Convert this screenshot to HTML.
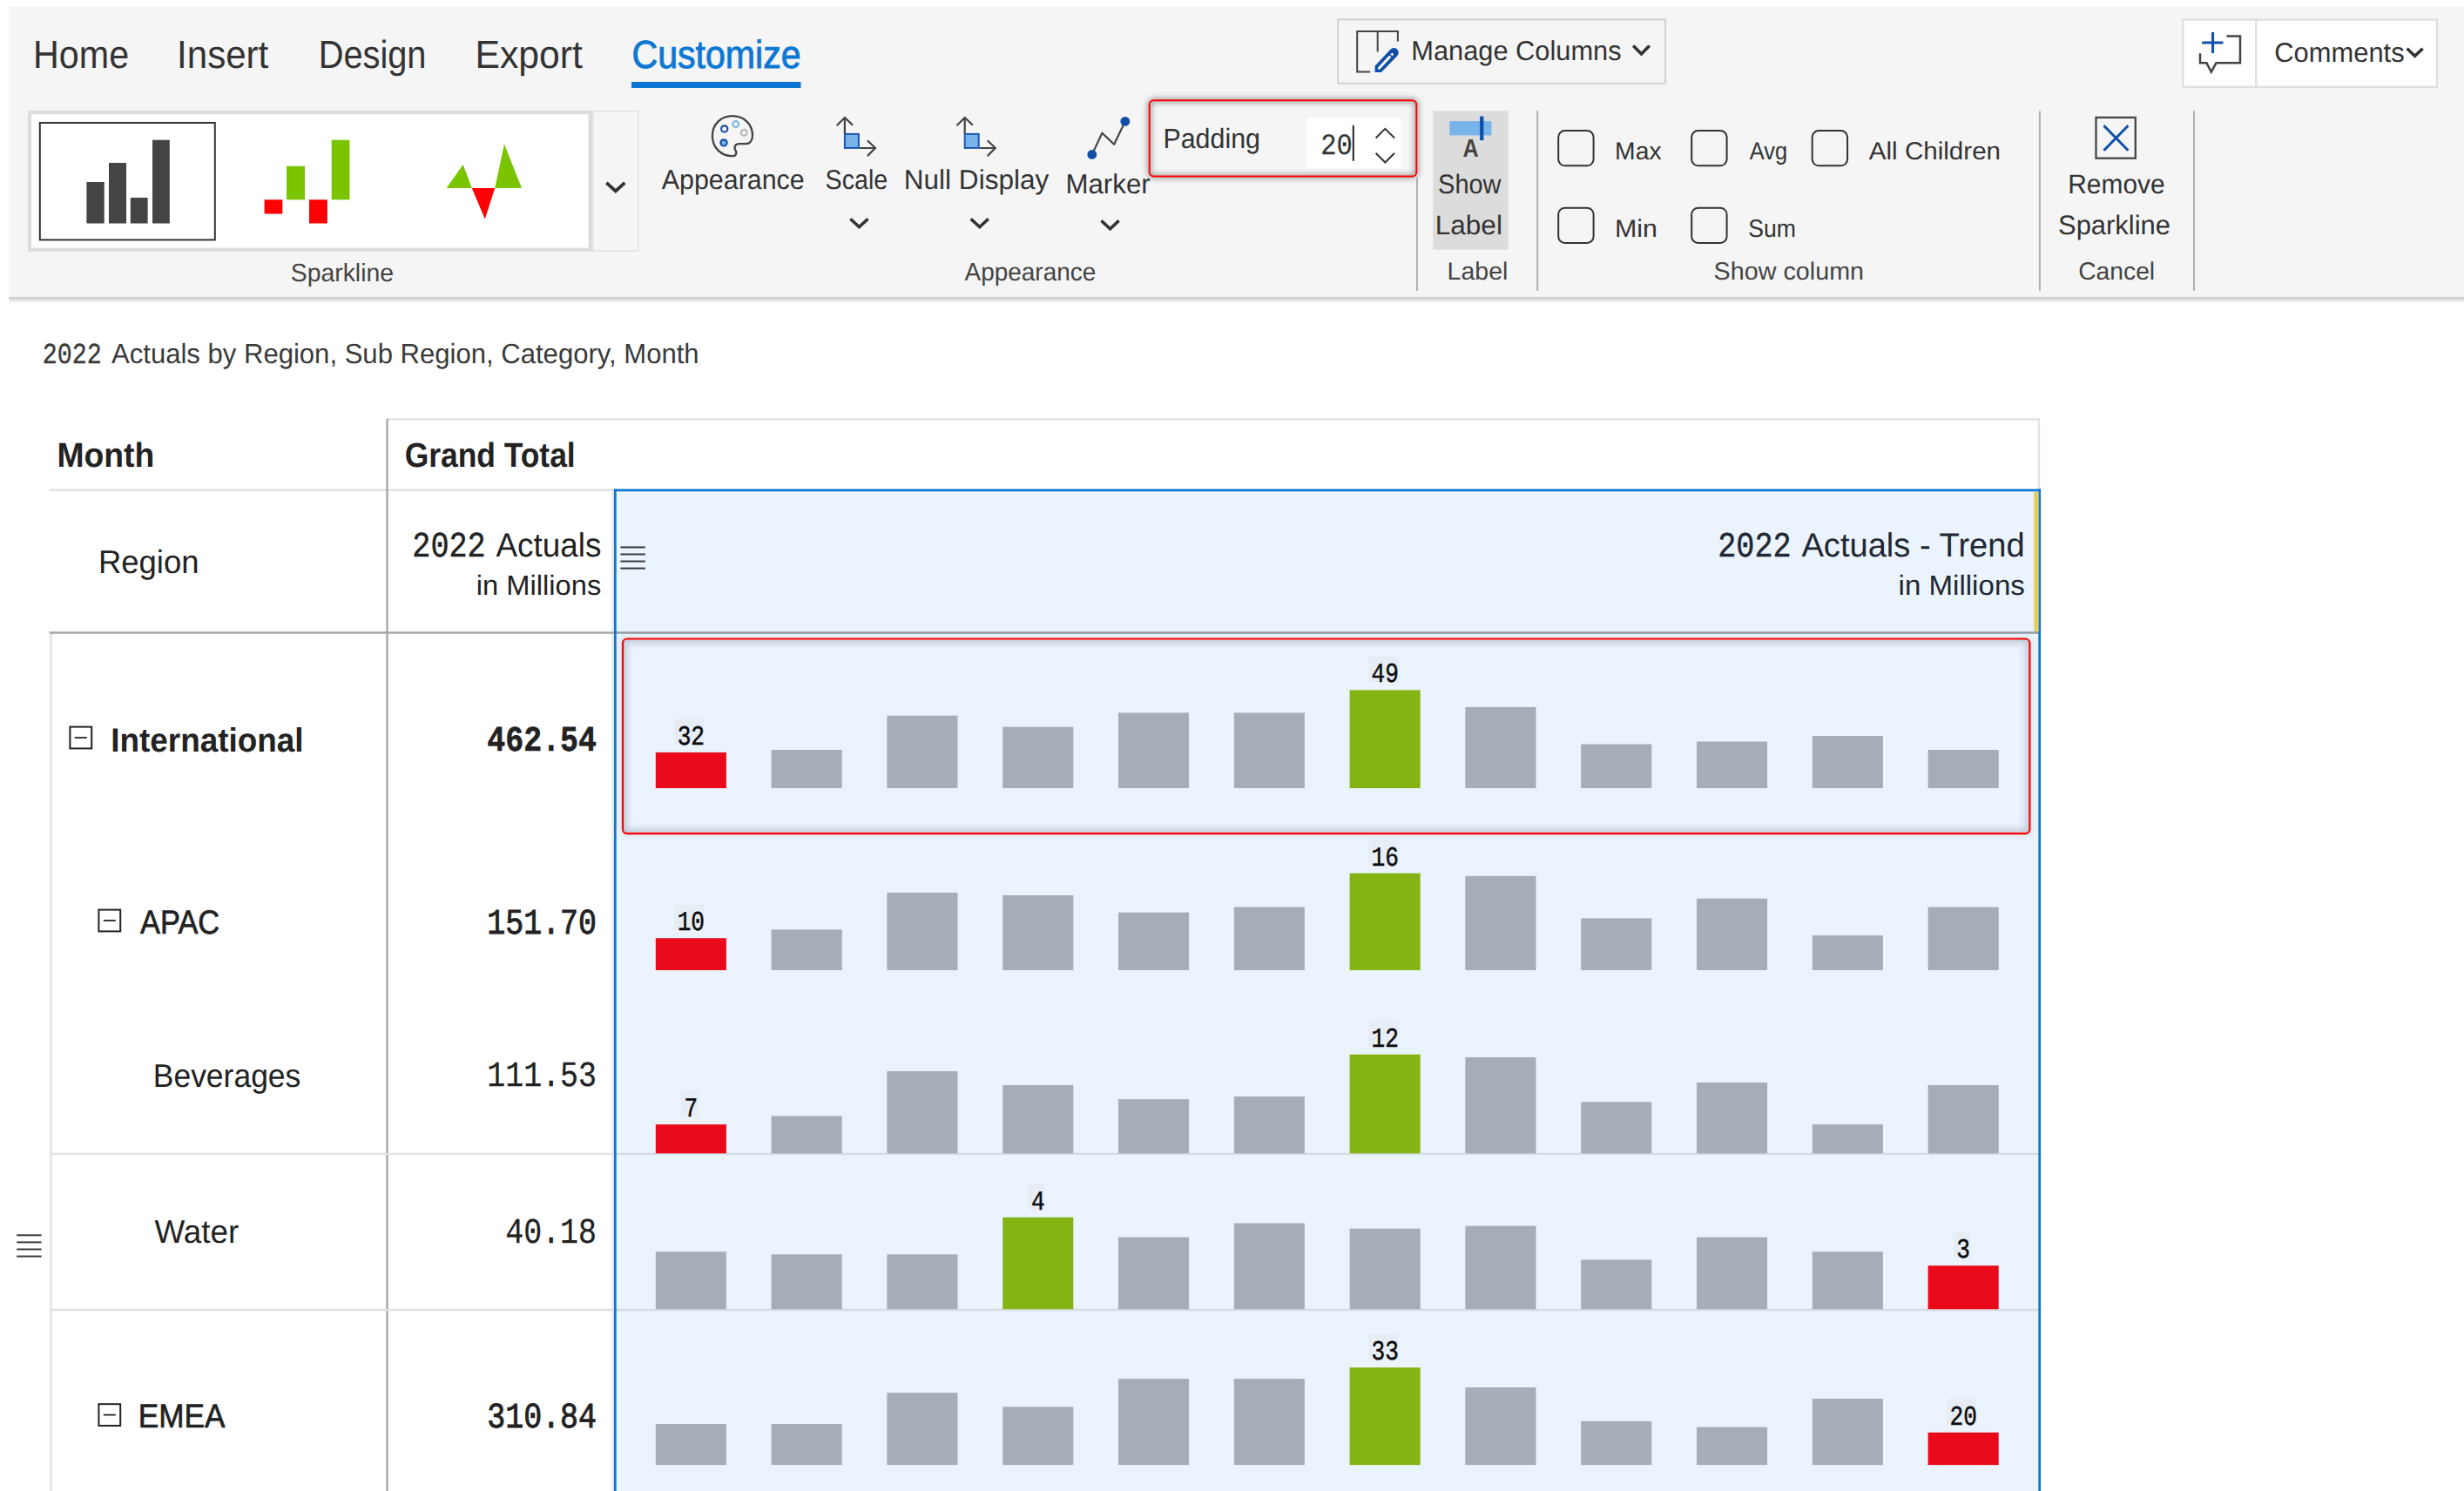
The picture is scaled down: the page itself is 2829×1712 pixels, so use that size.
<!DOCTYPE html>
<html lang="en">
<head>
<meta charset="utf-8">
<title>Sparkline padding</title>
<style>
html,body{margin:0;padding:0;background:#fff;}
body{width:2829px;height:1712px;overflow:hidden;font-family:"Liberation Sans",sans-serif;}
svg{display:block;position:absolute;left:0;top:0;}
text{white-space:pre;}
</style>
</head>
<body>
<svg width="2829" height="1712" viewBox="0 0 2829 1712" text-rendering="geometricPrecision">
<defs>
<linearGradient id="rshadow" x1="0" y1="0" x2="0" y2="1"><stop offset="0" stop-color="#000" stop-opacity="0.22"/><stop offset="1" stop-color="#000" stop-opacity="0"/></linearGradient>
<filter id="glow" x="-5%" y="-20%" width="110%" height="140%"><feGaussianBlur stdDeviation="3"/></filter>
<filter id="glow2" x="-5%" y="-20%" width="110%" height="140%"><feGaussianBlur stdDeviation="4"/></filter>
</defs>
<rect x="10.00" y="341.00" width="2819.00" height="7.00" fill="url(#rshadow)" />
<rect x="10.00" y="8.00" width="2819.00" height="333.00" fill="#f5f5f5" />
<rect x="725.00" y="94.00" width="194.50" height="7.00" fill="#0d78d4" />
<rect x="32.00" y="126.90" width="647.90" height="161.80" fill="#dcdcdc" />
<rect x="36.00" y="131.20" width="639.60" height="153.40" fill="#fff" />
<rect x="680.60" y="127.60" width="52.20" height="160.40" fill="#f5f5f5" stroke="#e0e0e0" stroke-width="1.4"/>
<rect x="45.80" y="141.00" width="201.00" height="134.40" fill="#fff" stroke="#333" stroke-width="2"/>
<rect x="99.40" y="209.00" width="20.30" height="47.50" fill="#444" />
<rect x="125.00" y="187.00" width="20.00" height="69.50" fill="#444" />
<rect x="149.80" y="227.00" width="19.80" height="29.50" fill="#444" />
<rect x="175.00" y="160.70" width="19.80" height="95.80" fill="#444" />
<rect x="303.60" y="229.30" width="20.70" height="16.20" fill="#ff0000" />
<rect x="329.00" y="190.70" width="21.00" height="38.60" fill="#7bc400" />
<rect x="355.00" y="229.30" width="20.80" height="27.20" fill="#ff0000" />
<rect x="380.70" y="160.70" width="20.70" height="68.60" fill="#7bc400" />
<path d="M512.6 216 L531.7 189 L541.8 216 Z" stroke="none" stroke-width="2" fill="#7bc400" />
<path d="M541.8 216 L568.2 216 L556.8 251.6 Z" stroke="none" stroke-width="2" fill="#ff0000" />
<path d="M568.2 216 L579 165.6 L599 216 Z" stroke="none" stroke-width="2" fill="#7bc400" />
<path d="M696.30 209.80 L706.80 219.40 L717.30 209.80" stroke="#333" stroke-width="3.8" fill="none" stroke-linejoin="miter"/>
<path d="M841 133.2 C827 133.2 817.9 143.5 817.9 156 C817.9 169.5 828 179.2 840.5 179.2 C845.5 179.2 846.3 175.5 844.4 172.3 C842.3 168.6 844.3 165.2 848.6 165.2 L855.5 165.2 C861 165.2 864 161 864 155.5 C864 143 854.5 133.2 841 133.2 Z" stroke="#444" stroke-width="2.3" fill="none" />
<circle cx="831.7" cy="147.9" r="3.6" fill="#fff" stroke="#1a4fa8" stroke-width="2.2"/>
<circle cx="844.7" cy="142.6" r="3.4" fill="#fff" stroke="#7db8e8" stroke-width="2.2"/>
<circle cx="854.2" cy="152.3" r="3.4" fill="#fff" stroke="#b8b8b8" stroke-width="2.2"/>
<circle cx="831" cy="163.9" r="3.6" fill="#78b4ea" stroke="#1a4fa8" stroke-width="2.2"/>
<path d="M969.9 153 L969.9 135.4 M960.6 144.3 L969.9 135 L979 143.6" stroke="#444" stroke-width="2.2" fill="none" />
<path d="M986.8 170 L1004.6 170 M995.9 161.2 L1005 170 L995.9 179.1" stroke="#444" stroke-width="2.2" fill="none" />
<rect x="969.90" y="153.90" width="16.00" height="16.00" fill="#78b4ea" stroke="#1c56b0" stroke-width="2"/>
<path d="M976.40 251.40 L986.45 260.60 L996.50 251.40" stroke="#333" stroke-width="3.5" fill="none" stroke-linejoin="miter"/>
<path d="M1107.7 153 L1107.7 135.4 M1098.4 144.3 L1107.7 135 L1116.8 143.6" stroke="#444" stroke-width="2.2" fill="none" />
<path d="M1124.6 170 L1142.4 170 M1133.7 161.2 L1142.8 170 L1133.7 179.1" stroke="#444" stroke-width="2.2" fill="none" />
<rect x="1107.70" y="153.90" width="16.00" height="16.00" fill="#78b4ea" stroke="#1c56b0" stroke-width="2"/>
<path d="M1114.70 251.40 L1124.75 260.60 L1134.80 251.40" stroke="#333" stroke-width="3.5" fill="none" stroke-linejoin="miter"/>
<path d="M1253.8 177.4 L1265.4 152.7 L1279.1 165.8 L1291.8 139.4" stroke="#444" stroke-width="2.2" fill="none" stroke-linejoin="round"/>
<circle cx="1253.8" cy="177.4" r="5.4" fill="#0f4fa8"/>
<circle cx="1291.8" cy="139.4" r="5.4" fill="#0f4fa8"/>
<path d="M1264.50 253.40 L1274.55 262.80 L1284.60 253.40" stroke="#333" stroke-width="3.5" fill="none" stroke-linejoin="miter"/>
<rect x="1319.7" y="115.2" width="306.6" height="87.2" rx="5" fill="#f5f5f5"/>
<rect x="1319.7" y="115.2" width="306.6" height="87.2" rx="5" fill="none" stroke="#000" stroke-opacity="0.38" stroke-width="5" filter="url(#glow)"/>
<rect x="1319.7" y="115.2" width="306.6" height="87.2" rx="5" fill="none" stroke="#ff0000" stroke-width="2"/>
<rect x="1500.50" y="135.50" width="107.80" height="58.00" fill="#fff" />
<rect x="1552.80" y="143.80" width="2.00" height="41.00" fill="#222" />
<path d="M1579.60 158.50 L1590.35 147.90 L1601.10 158.50" stroke="#333" stroke-width="2" fill="none" stroke-linejoin="miter"/>
<path d="M1579.60 175.70 L1590.35 186.50 L1601.10 175.70" stroke="#333" stroke-width="2" fill="none" stroke-linejoin="miter"/>
<rect x="1536.20" y="22.40" width="375.80" height="73.40" fill="#f5f5f5" stroke="#cfcfcf" stroke-width="1.8"/>
<path d="M1573.2 82.4 L1558.2 82.4 L1558.2 36 L1604.9 36 L1604.9 47.5 M1581.7 36 L1581.7 59.4" stroke="#444" stroke-width="2" fill="none" />
<path d="M1578.6 83 L1578.6 75.8 L1596.4 56.8 A5.3 5.3 0 0 1 1604.4 64 L1586 83 Z" stroke="none" stroke-width="0" fill="#0f4fa8" />
<path d="M1583.4 78.2 L1598.4 62.3" stroke="#f5f5f5" stroke-width="3.1" fill="none" stroke-linecap="round"/>
<path d="M1594.2 61.6 L1599.4 66.4" stroke="#0f4fa8" stroke-width="1.8" fill="none" />
<path d="M1875.20 52.60 L1884.50 62.00 L1893.80 52.60" stroke="#333" stroke-width="3.6" fill="none" stroke-linejoin="miter"/>
<rect x="2506.40" y="22.60" width="291.60" height="77.20" fill="#fff" stroke="#dedede" stroke-width="2.3"/>
<line x1="2590.20" y1="22.50" x2="2590.20" y2="99.80" stroke="#dedede" stroke-width="2.2" />
<path d="M2540.6 36.9 L2540.6 61 M2528.2 49 L2552.5 49" stroke="#0f4fa8" stroke-width="3" fill="none" />
<path d="M2556.5 41.6 L2572 41.6 L2572 72.3 L2544.4 72.3 L2538.8 82.5 L2533.5 72.3 L2526 72.3 L2526 61.3" stroke="#444" stroke-width="2.5" fill="none" />
<path d="M2763.60 55.80 L2772.60 64.20 L2781.60 55.80" stroke="#333" stroke-width="3.6" fill="none" stroke-linejoin="miter"/>
<line x1="1627.00" y1="203.50" x2="1627.00" y2="334.00" stroke="#b0b0b0" stroke-width="2" />
<line x1="1765.20" y1="127.30" x2="1765.20" y2="334.00" stroke="#b0b0b0" stroke-width="2" />
<line x1="2341.90" y1="127.30" x2="2341.90" y2="334.00" stroke="#b0b0b0" stroke-width="2" />
<line x1="2519.00" y1="127.30" x2="2519.00" y2="334.00" stroke="#b0b0b0" stroke-width="2" />
<rect x="1645.30" y="127.30" width="86.60" height="159.40" fill="#dcdcdc" />
<rect x="1664.30" y="139.10" width="48.10" height="16.30" fill="#78b4ea" />
<rect x="1699.10" y="133.60" width="4.30" height="27.50" fill="#0f4fa8" />
<rect x="1789.2" y="150" width="40.4" height="40.3" rx="7.5" fill="none" stroke="#333" stroke-width="2"/>
<rect x="1942.2" y="150" width="40.4" height="40.3" rx="7.5" fill="none" stroke="#333" stroke-width="2"/>
<rect x="2080.7" y="150" width="40.4" height="40.3" rx="7.5" fill="none" stroke="#333" stroke-width="2"/>
<rect x="1789.2" y="238.7" width="40.4" height="40.3" rx="7.5" fill="none" stroke="#333" stroke-width="2"/>
<rect x="1942.2" y="238.7" width="40.4" height="40.3" rx="7.5" fill="none" stroke="#333" stroke-width="2"/>
<rect x="2406.50" y="134.90" width="45.30" height="46.80" fill="none" stroke="#444" stroke-width="2.3"/>
<path d="M2415.5 144.2 L2443.4 172.7 M2443.4 144.2 L2415.5 172.7" stroke="#0f4fa8" stroke-width="3" fill="none" />
<rect x="706.30" y="562.70" width="1636.40" height="1149.30" fill="#ebf3fc" />
<line x1="703.50" y1="563.00" x2="703.50" y2="1712.00" stroke="#ebe8e5" stroke-width="2" />
<line x1="444.50" y1="481.60" x2="2342.00" y2="481.60" stroke="#e2e2e2" stroke-width="2.5" />
<line x1="2341.00" y1="481.60" x2="2341.00" y2="563.00" stroke="#e2e2e2" stroke-width="2.5" />
<line x1="56.60" y1="562.70" x2="705.00" y2="562.70" stroke="#e2e2e2" stroke-width="2.5" />
<line x1="444.50" y1="481.00" x2="444.50" y2="1712.00" stroke="#a8a8a8" stroke-width="2.4" />
<line x1="58.50" y1="726.00" x2="58.50" y2="1712.00" stroke="#e6e6e6" stroke-width="2.8" />
<line x1="56.60" y1="726.50" x2="706.00" y2="726.50" stroke="#a6a6a6" stroke-width="2.4" />
<line x1="706.00" y1="726.50" x2="2342.00" y2="726.50" stroke="#939ba6" stroke-width="2.4" />
<line x1="56.60" y1="1324.90" x2="705.00" y2="1324.90" stroke="#e2e2e2" stroke-width="2.4" />
<line x1="707.00" y1="1324.90" x2="2341.00" y2="1324.90" stroke="#d5dbe3" stroke-width="2.4" />
<line x1="56.60" y1="1504.00" x2="705.00" y2="1504.00" stroke="#e2e2e2" stroke-width="2.4" />
<line x1="707.00" y1="1504.00" x2="2341.00" y2="1504.00" stroke="#d5dbe3" stroke-width="2.4" />
<line x1="706.30" y1="561.60" x2="706.30" y2="1712.00" stroke="#0d78d4" stroke-width="2.8" />
<line x1="2341.70" y1="561.60" x2="2341.70" y2="1712.00" stroke="#0d78d4" stroke-width="2.8" />
<line x1="704.90" y1="562.80" x2="2343.10" y2="562.80" stroke="#0d78d4" stroke-width="2.8" />
<rect x="2335.30" y="565.00" width="5.20" height="160.00" fill="#e6cf5a" />
<line x1="712.40" y1="628.40" x2="740.80" y2="628.40" stroke="#3a3a3a" stroke-width="2" />
<line x1="712.40" y1="636.47" x2="740.80" y2="636.47" stroke="#3a3a3a" stroke-width="2" />
<line x1="712.40" y1="644.53" x2="740.80" y2="644.53" stroke="#3a3a3a" stroke-width="2" />
<line x1="712.40" y1="652.60" x2="740.80" y2="652.60" stroke="#3a3a3a" stroke-width="2" />
<line x1="19.20" y1="1418.30" x2="47.60" y2="1418.30" stroke="#3a3a3a" stroke-width="2" />
<line x1="19.20" y1="1426.40" x2="47.60" y2="1426.40" stroke="#3a3a3a" stroke-width="2" />
<line x1="19.20" y1="1434.50" x2="47.60" y2="1434.50" stroke="#3a3a3a" stroke-width="2" />
<line x1="19.20" y1="1442.60" x2="47.60" y2="1442.60" stroke="#3a3a3a" stroke-width="2" />
<rect x="80.40" y="834.60" width="24.80" height="24.80" fill="#fff" stroke="#222" stroke-width="2"/>
<line x1="85.80" y1="847.00" x2="99.80" y2="847.00" stroke="#222" stroke-width="1.8" />
<rect x="113.40" y="1044.60" width="24.80" height="24.80" fill="#fff" stroke="#222" stroke-width="2"/>
<line x1="118.80" y1="1057.00" x2="132.80" y2="1057.00" stroke="#222" stroke-width="1.8" />
<rect x="113.40" y="1612.20" width="24.80" height="24.80" fill="#fff" stroke="#222" stroke-width="2"/>
<line x1="118.80" y1="1624.60" x2="132.80" y2="1624.60" stroke="#222" stroke-width="1.8" />
<rect x="752.80" y="863.90" width="81.10" height="41.10" fill="#ea0a1b" />
<rect x="774.25" y="825.20" width="34.80" height="29.50" fill="#e6edf5" />
<rect x="885.60" y="861.00" width="81.10" height="44.00" fill="#a6adb8" />
<rect x="1018.40" y="821.70" width="81.10" height="83.30" fill="#a6adb8" />
<rect x="1151.20" y="834.60" width="81.10" height="70.40" fill="#a6adb8" />
<rect x="1284.00" y="818.40" width="81.10" height="86.60" fill="#a6adb8" />
<rect x="1416.80" y="818.40" width="81.10" height="86.60" fill="#a6adb8" />
<rect x="1549.60" y="792.40" width="81.10" height="112.60" fill="#84b414" />
<rect x="1571.05" y="753.70" width="34.80" height="29.50" fill="#e6edf5" />
<rect x="1682.40" y="811.90" width="81.10" height="93.10" fill="#a6adb8" />
<rect x="1815.20" y="854.50" width="81.10" height="50.50" fill="#a6adb8" />
<rect x="1948.00" y="851.50" width="81.10" height="53.50" fill="#a6adb8" />
<rect x="2080.80" y="845.00" width="81.10" height="60.00" fill="#a6adb8" />
<rect x="2213.60" y="861.00" width="81.10" height="44.00" fill="#a6adb8" />
<rect x="752.80" y="1077.20" width="81.10" height="36.80" fill="#ea0a1b" />
<rect x="774.25" y="1038.50" width="34.80" height="29.50" fill="#e6edf5" />
<rect x="885.60" y="1067.40" width="81.10" height="46.60" fill="#a6adb8" />
<rect x="1018.40" y="1024.90" width="81.10" height="89.10" fill="#a6adb8" />
<rect x="1151.20" y="1028.00" width="81.10" height="86.00" fill="#a6adb8" />
<rect x="1284.00" y="1047.70" width="81.10" height="66.30" fill="#a6adb8" />
<rect x="1416.80" y="1041.50" width="81.10" height="72.50" fill="#a6adb8" />
<rect x="1549.60" y="1002.70" width="81.10" height="111.30" fill="#84b414" />
<rect x="1571.05" y="964.00" width="34.80" height="29.50" fill="#e6edf5" />
<rect x="1682.40" y="1005.80" width="81.10" height="108.20" fill="#a6adb8" />
<rect x="1815.20" y="1054.40" width="81.10" height="59.60" fill="#a6adb8" />
<rect x="1948.00" y="1031.70" width="81.10" height="82.30" fill="#a6adb8" />
<rect x="2080.80" y="1074.10" width="81.10" height="39.90" fill="#a6adb8" />
<rect x="2213.60" y="1041.50" width="81.10" height="72.50" fill="#a6adb8" />
<rect x="752.80" y="1291.10" width="81.10" height="33.20" fill="#ea0a1b" />
<rect x="782.10" y="1252.40" width="19.10" height="29.50" fill="#e6edf5" />
<rect x="885.60" y="1281.30" width="81.10" height="43.00" fill="#a6adb8" />
<rect x="1018.40" y="1230.00" width="81.10" height="94.30" fill="#a6adb8" />
<rect x="1151.20" y="1246.00" width="81.10" height="78.30" fill="#a6adb8" />
<rect x="1284.00" y="1262.10" width="81.10" height="62.20" fill="#a6adb8" />
<rect x="1416.80" y="1259.00" width="81.10" height="65.30" fill="#a6adb8" />
<rect x="1549.60" y="1210.80" width="81.10" height="113.50" fill="#84b414" />
<rect x="1571.05" y="1172.10" width="34.80" height="29.50" fill="#e6edf5" />
<rect x="1682.40" y="1214.00" width="81.10" height="110.30" fill="#a6adb8" />
<rect x="1815.20" y="1265.20" width="81.10" height="59.10" fill="#a6adb8" />
<rect x="1948.00" y="1243.00" width="81.10" height="81.30" fill="#a6adb8" />
<rect x="2080.80" y="1291.10" width="81.10" height="33.20" fill="#a6adb8" />
<rect x="2213.60" y="1246.00" width="81.10" height="78.30" fill="#a6adb8" />
<rect x="752.80" y="1437.20" width="81.10" height="66.00" fill="#a6adb8" />
<rect x="885.60" y="1440.30" width="81.10" height="62.90" fill="#a6adb8" />
<rect x="1018.40" y="1440.30" width="81.10" height="62.90" fill="#a6adb8" />
<rect x="1151.20" y="1397.80" width="81.10" height="105.40" fill="#84b414" />
<rect x="1180.50" y="1359.10" width="19.10" height="29.50" fill="#e6edf5" />
<rect x="1284.00" y="1420.60" width="81.10" height="82.60" fill="#a6adb8" />
<rect x="1416.80" y="1404.50" width="81.10" height="98.70" fill="#a6adb8" />
<rect x="1549.60" y="1410.70" width="81.10" height="92.50" fill="#a6adb8" />
<rect x="1682.40" y="1407.60" width="81.10" height="95.60" fill="#a6adb8" />
<rect x="1815.20" y="1446.50" width="81.10" height="56.70" fill="#a6adb8" />
<rect x="1948.00" y="1420.60" width="81.10" height="82.60" fill="#a6adb8" />
<rect x="2080.80" y="1437.20" width="81.10" height="66.00" fill="#a6adb8" />
<rect x="2213.60" y="1453.20" width="81.10" height="50.00" fill="#ea0a1b" />
<rect x="2242.90" y="1414.50" width="19.10" height="29.50" fill="#e6edf5" />
<rect x="752.80" y="1635.00" width="81.10" height="47.10" fill="#a6adb8" />
<rect x="885.60" y="1635.00" width="81.10" height="47.10" fill="#a6adb8" />
<rect x="1018.40" y="1599.20" width="81.10" height="82.90" fill="#a6adb8" />
<rect x="1151.20" y="1615.30" width="81.10" height="66.80" fill="#a6adb8" />
<rect x="1284.00" y="1583.20" width="81.10" height="98.90" fill="#a6adb8" />
<rect x="1416.80" y="1583.20" width="81.10" height="98.90" fill="#a6adb8" />
<rect x="1549.60" y="1570.20" width="81.10" height="111.90" fill="#84b414" />
<rect x="1571.05" y="1531.50" width="34.80" height="29.50" fill="#e6edf5" />
<rect x="1682.40" y="1593.00" width="81.10" height="89.10" fill="#a6adb8" />
<rect x="1815.20" y="1631.90" width="81.10" height="50.20" fill="#a6adb8" />
<rect x="1948.00" y="1638.60" width="81.10" height="43.50" fill="#a6adb8" />
<rect x="2080.80" y="1606.00" width="81.10" height="76.10" fill="#a6adb8" />
<rect x="2213.60" y="1644.80" width="81.10" height="37.30" fill="#ea0a1b" />
<rect x="2235.05" y="1606.10" width="34.80" height="29.50" fill="#e6edf5" />
<clipPath id="rbclip"><rect x="715" y="733.5" width="1615.4" height="223.6" rx="5"/></clipPath>
<rect x="715" y="733.5" width="1615.4" height="223.6" rx="5" fill="none" stroke="#34465c" stroke-opacity="0.10" stroke-width="5" filter="url(#glow)"/>
<rect x="715" y="733.5" width="1615.4" height="223.6" rx="5" fill="none" stroke="#34465c" stroke-opacity="0.22" stroke-width="8" filter="url(#glow2)" clip-path="url(#rbclip)"/>
<rect x="715" y="733.5" width="1615.4" height="223.6" rx="5" fill="none" stroke="#ff0000" stroke-width="2.2"/>
<text transform="translate(38.05 78.00) scale(0.9172 1)" font-family="'Liberation Sans', sans-serif" font-size="45" font-weight="400" fill="#333">Home</text>
<text transform="translate(203.06 78.00) scale(0.9345 1)" font-family="'Liberation Sans', sans-serif" font-size="45" font-weight="400" fill="#333">Insert</text>
<text transform="translate(365.65 78.00) scale(0.8841 1)" font-family="'Liberation Sans', sans-serif" font-size="45" font-weight="400" fill="#333">Design</text>
<text transform="translate(545.46 78.00) scale(0.9478 1)" font-family="'Liberation Sans', sans-serif" font-size="45" font-weight="400" fill="#333">Export</text>
<text transform="translate(725.47 78.00) scale(0.9134 1)" font-family="'Liberation Sans', sans-serif" font-size="45" font-weight="400" fill="#0d78d4" stroke="#0d78d4" stroke-width="0.9">Customize</text>
<text transform="translate(333.82 322.60) scale(0.9775 1)" font-family="'Liberation Sans', sans-serif" font-size="29" font-weight="400" fill="#444">Sparkline</text>
<text transform="translate(759.80 217.20) scale(0.9648 1)" font-family="'Liberation Sans', sans-serif" font-size="31.5" font-weight="400" fill="#333">Appearance</text>
<text transform="translate(947.59 217.40) scale(0.9084 1)" font-family="'Liberation Sans', sans-serif" font-size="31.5" font-weight="400" fill="#333">Scale</text>
<text transform="translate(1037.80 217.40) scale(1.0009 1)" font-family="'Liberation Sans', sans-serif" font-size="31.5" font-weight="400" fill="#333">Null Display</text>
<text transform="translate(1223.42 222.40) scale(0.9925 1)" font-family="'Liberation Sans', sans-serif" font-size="31.5" font-weight="400" fill="#333">Marker</text>
<text transform="translate(1335.40 170.40) scale(0.9504 1)" font-family="'Liberation Sans', sans-serif" font-size="32" font-weight="400" fill="#333">Padding</text>
<text transform="translate(1516.20 176.70) scale(0.8923 1)" font-family="'Liberation Mono', monospace" font-size="34.18" font-weight="400" fill="#333" stroke="#333" stroke-width="0.25">20</text>
<text transform="translate(1107.50 321.50) scale(0.9641 1)" font-family="'Liberation Sans', sans-serif" font-size="29" font-weight="400" fill="#444">Appearance</text>
<text transform="translate(1620.24 68.80) scale(0.9778 1)" font-family="'Liberation Sans', sans-serif" font-size="31.5" font-weight="400" fill="#333">Manage Columns</text>
<text transform="translate(2611.22 70.60) scale(0.9812 1)" font-family="'Liberation Sans', sans-serif" font-size="31.5" font-weight="400" fill="#333">Comments</text>
<text transform="translate(1679.40 180.40) scale(0.8667 1)" font-family="'Liberation Sans', sans-serif" font-size="29" font-weight="700" fill="#444">A</text>
<text transform="translate(1651.07 221.90) scale(0.9344 1)" font-family="'Liberation Sans', sans-serif" font-size="31" font-weight="400" fill="#333">Show</text>
<text transform="translate(1647.66 269.40) scale(1.0186 1)" font-family="'Liberation Sans', sans-serif" font-size="31" font-weight="400" fill="#333">Label</text>
<text transform="translate(1661.60 321.00) scale(1.0000 1)" font-family="'Liberation Sans', sans-serif" font-size="28.5" font-weight="400" fill="#444">Label</text>
<text transform="translate(1854.12 182.80) scale(0.9924 1)" font-family="'Liberation Sans', sans-serif" font-size="28.5" font-weight="400" fill="#333">Max</text>
<text transform="translate(2008.70 182.80) scale(0.8943 1)" font-family="'Liberation Sans', sans-serif" font-size="28.5" font-weight="400" fill="#333">Avg</text>
<text transform="translate(2145.80 182.80) scale(1.0377 1)" font-family="'Liberation Sans', sans-serif" font-size="28.5" font-weight="400" fill="#333">All Children</text>
<text transform="translate(1853.97 272.10) scale(1.0672 1)" font-family="'Liberation Sans', sans-serif" font-size="28.5" font-weight="400" fill="#333">Min</text>
<text transform="translate(2007.17 272.10) scale(0.9345 1)" font-family="'Liberation Sans', sans-serif" font-size="28.5" font-weight="400" fill="#333">Sum</text>
<text transform="translate(1967.59 321.00) scale(1.0081 1)" font-family="'Liberation Sans', sans-serif" font-size="28.5" font-weight="400" fill="#444">Show column</text>
<text transform="translate(2374.27 221.90) scale(0.9644 1)" font-family="'Liberation Sans', sans-serif" font-size="31" font-weight="400" fill="#333">Remove</text>
<text transform="translate(2363.00 269.40) scale(0.9977 1)" font-family="'Liberation Sans', sans-serif" font-size="31" font-weight="400" fill="#333">Sparkline</text>
<text transform="translate(2386.21 321.00) scale(0.9909 1)" font-family="'Liberation Sans', sans-serif" font-size="28.5" font-weight="400" fill="#444">Cancel</text>
<text transform="translate(48.80 416.60) scale(0.8438 1)" font-family="'Liberation Mono', monospace" font-size="33.58" font-weight="400" fill="#3a3a3a" stroke="#3a3a3a" stroke-width="0.4">2022</text>
<text transform="translate(128.00 416.60) scale(0.9708 1)" font-family="'Liberation Sans', sans-serif" font-size="32" font-weight="400" fill="#3a3a3a">Actuals by Region, Sub Region, Category, Month</text>
<text transform="translate(65.41 536.20) scale(0.9439 1)" font-family="'Liberation Sans', sans-serif" font-size="39.5" font-weight="700" fill="#222">Month</text>
<text transform="translate(464.70 536.20) scale(0.8960 1)" font-family="'Liberation Sans', sans-serif" font-size="39.5" font-weight="700" fill="#222">Grand Total</text>
<text transform="translate(112.88 657.60) scale(0.9730 1)" font-family="'Liberation Sans', sans-serif" font-size="37.5" font-weight="400" fill="#222">Region</text>
<text transform="translate(473.30 639.30) scale(0.8538 1)" font-family="'Liberation Mono', monospace" font-size="41.19" font-weight="400" fill="#222" stroke="#222" stroke-width="0.5">2022</text>
<text transform="translate(569.50 639.30) scale(0.9576 1)" font-family="'Liberation Sans', sans-serif" font-size="38.5" font-weight="400" fill="#222">Actuals</text>
<text transform="translate(546.86 683.40) scale(1.0205 1)" font-family="'Liberation Sans', sans-serif" font-size="32" font-weight="400" fill="#222">in Millions</text>
<text transform="translate(1972.20 638.80) scale(0.8630 1)" font-family="'Liberation Mono', monospace" font-size="40.75" font-weight="400" fill="#1f2833" stroke="#1f2833" stroke-width="0.5">2022</text>
<text transform="translate(2068.40 638.80) scale(0.9899 1)" font-family="'Liberation Sans', sans-serif" font-size="38.5" font-weight="400" fill="#1f2833">Actuals - Trend</text>
<text transform="translate(2179.53 682.80) scale(1.0343 1)" font-family="'Liberation Sans', sans-serif" font-size="32" font-weight="400" fill="#1f2833">in Millions</text>
<text transform="translate(127.18 862.70) scale(0.9584 1)" font-family="'Liberation Sans', sans-serif" font-size="38.5" font-weight="700" fill="#222">International</text>
<text transform="translate(559.30 862.20) scale(0.8477 1)" font-family="'Liberation Mono', monospace" font-size="41.19" font-weight="700" fill="#222" stroke="#222" stroke-width="0.6">462.54</text>
<text transform="translate(161.10 1071.90) scale(0.8925 1)" font-family="'Liberation Sans', sans-serif" font-size="38.5" font-weight="400" fill="#222" stroke="#222" stroke-width="0.7">APAC</text>
<text transform="translate(559.30 1071.80) scale(0.8477 1)" font-family="'Liberation Mono', monospace" font-size="41.19" font-weight="400" fill="#222" stroke="#222" stroke-width="0.95">151.70</text>
<text transform="translate(175.76 1247.60) scale(0.9457 1)" font-family="'Liberation Sans', sans-serif" font-size="37.5" font-weight="400" fill="#222">Beverages</text>
<text transform="translate(559.30 1247.40) scale(0.8477 1)" font-family="'Liberation Mono', monospace" font-size="41.19" font-weight="400" fill="#222" stroke="#222" stroke-width="0.3">111.53</text>
<text transform="translate(177.40 1426.80) scale(0.9813 1)" font-family="'Liberation Sans', sans-serif" font-size="37.5" font-weight="400" fill="#222">Water</text>
<text transform="translate(580.25 1426.60) scale(0.8477 1)" font-family="'Liberation Mono', monospace" font-size="41.19" font-weight="400" fill="#222" stroke="#222" stroke-width="0.3">40.18</text>
<text transform="translate(158.86 1638.70) scale(0.9133 1)" font-family="'Liberation Sans', sans-serif" font-size="38.5" font-weight="400" fill="#222" stroke="#222" stroke-width="0.7">EMEA</text>
<text transform="translate(559.30 1638.50) scale(0.8477 1)" font-family="'Liberation Mono', monospace" font-size="41.19" font-weight="400" fill="#222" stroke="#222" stroke-width="0.95">310.84</text>
<text transform="translate(777.65 854.70) scale(0.8270 1)" font-family="'Liberation Mono', monospace" font-size="31.64" font-weight="400" fill="#0a0a0a" stroke="#0a0a0a" stroke-width="0.45">32</text>
<text transform="translate(1574.45 783.20) scale(0.8270 1)" font-family="'Liberation Mono', monospace" font-size="31.64" font-weight="400" fill="#0a0a0a" stroke="#0a0a0a" stroke-width="0.45">49</text>
<text transform="translate(777.65 1068.00) scale(0.8270 1)" font-family="'Liberation Mono', monospace" font-size="31.64" font-weight="400" fill="#0a0a0a" stroke="#0a0a0a" stroke-width="0.45">10</text>
<text transform="translate(1574.45 993.50) scale(0.8270 1)" font-family="'Liberation Mono', monospace" font-size="31.64" font-weight="400" fill="#0a0a0a" stroke="#0a0a0a" stroke-width="0.45">16</text>
<text transform="translate(785.50 1281.90) scale(0.8270 1)" font-family="'Liberation Mono', monospace" font-size="31.64" font-weight="400" fill="#0a0a0a" stroke="#0a0a0a" stroke-width="0.45">7</text>
<text transform="translate(1574.45 1201.60) scale(0.8270 1)" font-family="'Liberation Mono', monospace" font-size="31.64" font-weight="400" fill="#0a0a0a" stroke="#0a0a0a" stroke-width="0.45">12</text>
<text transform="translate(1183.90 1388.60) scale(0.8270 1)" font-family="'Liberation Mono', monospace" font-size="31.64" font-weight="400" fill="#0a0a0a" stroke="#0a0a0a" stroke-width="0.45">4</text>
<text transform="translate(2246.30 1444.00) scale(0.8270 1)" font-family="'Liberation Mono', monospace" font-size="31.64" font-weight="400" fill="#0a0a0a" stroke="#0a0a0a" stroke-width="0.45">3</text>
<text transform="translate(1574.45 1561.00) scale(0.8270 1)" font-family="'Liberation Mono', monospace" font-size="31.64" font-weight="400" fill="#0a0a0a" stroke="#0a0a0a" stroke-width="0.45">33</text>
<text transform="translate(2238.45 1635.60) scale(0.8270 1)" font-family="'Liberation Mono', monospace" font-size="31.64" font-weight="400" fill="#0a0a0a" stroke="#0a0a0a" stroke-width="0.45">20</text>
</svg>
</body>
</html>
